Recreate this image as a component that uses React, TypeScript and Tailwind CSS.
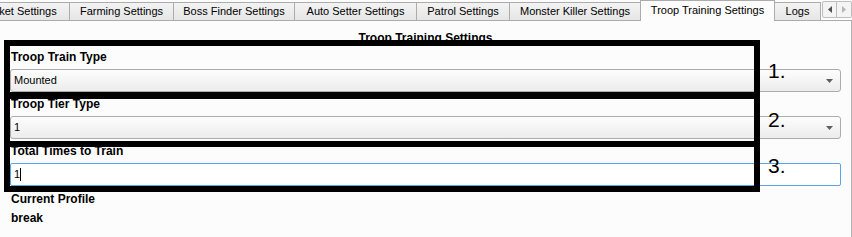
import React from "react";

const tabs = [
  { label: "Market Settings", w: "w-[102px] -ml-[32px]" },
  { label: "Farming Settings", w: "w-[104px]" },
  { label: "Boss Finder Settings", w: "w-[121px]" },
  { label: "Auto Setter Settings", w: "w-[122px]" },
  { label: "Patrol Settings", w: "w-[93px]" },
  { label: "Monster Killer Settings", w: "w-[130px]", noRight: true },
];

function Combo({ value }: { value: string }) {
  return (
    <div className="h-[23px] mt-[5px] flex items-center justify-between rounded-[3px] border border-[#acacac] bg-linear-to-b from-[#fdfdfd] to-[#ececec] pl-[3px] pr-[7px]">
      <span className="text-[11px] leading-[13px]">{value}</span>
      <svg width="7" height="4" viewBox="0 0 7 4">
        <path d="M0 0h7L3.5 4z" fill="#5f5f5f" />
      </svg>
    </div>
  );
}

function Label({ children, className = "" }: { children: React.ReactNode; className?: string }) {
  return <div className={`pl-[1px] text-[12px] leading-[13px] font-bold ${className}`}>{children}</div>;
}

export default function App() {
  return (
    <div
      className="relative w-[852px] h-[237px] overflow-hidden bg-[#fcfcfc] text-black flex flex-col"
      style={{ fontFamily: '"Liberation Sans", Arial, sans-serif' }}
    >
      {/* tab strip */}
      <div className="h-[21px] flex items-end shrink-0">
        {tabs.map((t) => (
          <div
            key={t.label}
            className={`${t.w} shrink-0 h-[19px] flex items-center justify-center border-t border-b border-[#acacac] ${
              t.noRight ? "" : "border-r"
            } bg-linear-to-b from-[#f3f3f3] to-[#e6e6e6] text-[11px] leading-[13px] whitespace-nowrap`}
          >
            {t.label}
          </div>
        ))}
        <div className="w-[135px] shrink-0 h-[21px] flex items-center justify-center border-t border-l border-r border-[#acacac] bg-[#fcfcfc] text-[11px] leading-[13px] pb-[2px] whitespace-nowrap">
          Troop Training Settings
        </div>
        <div className="w-[46px] shrink-0 h-[19px] flex items-center justify-center border-t border-b border-r border-[#acacac] bg-linear-to-b from-[#f3f3f3] to-[#e6e6e6] text-[11px] leading-[13px]">
          Logs
        </div>
        <div className="flex-1 h-[21px] flex items-start justify-end border-b border-[#acacac]">
          <div className="flex mt-[1px]">
            <div className="w-[15px] h-[17px] flex items-center justify-center border border-[#bdbdbd] bg-[#f4f4f4] rounded-l-[2px]">
              <svg width="4" height="7" viewBox="0 0 4 7">
                <path d="M4 0v7L0 3.5z" fill="#505050" />
              </svg>
            </div>
            <div className="w-[15px] h-[17px] flex items-center justify-center border border-l-0 border-[#bdbdbd] bg-[#f4f4f4] rounded-r-[2px]">
              <svg width="4" height="7" viewBox="0 0 4 7">
                <path d="M0 0v7L4 3.5z" fill="#b5b5b5" />
              </svg>
            </div>
          </div>
        </div>
      </div>

      {/* page */}
      <div className="flex-1 flex flex-col border-r border-[#b4b4b4] pl-[10px] pr-[10px] pt-[11px]">
        <div className="text-center text-[12px] leading-[13px] font-bold">Troop Training Settings</div>

        <Label className="mt-[6px]">Troop Train Type</Label>
        <Combo value="Mounted" />

        <Label className="mt-[6px]">Troop Tier Type</Label>
        <Combo value="1" />

        <Label className="mt-[6px]">Total Times to Train</Label>
        <div className="h-[23px] mt-[5px] flex items-center rounded-[2px] border border-[#56a5ee] bg-white pl-[3px]">
          <span className="text-[11px] leading-[13px]">1</span>
          <span className="w-px h-[13px] bg-black" />
        </div>

        <Label className="mt-[7px]">Current Profile</Label>
        <Label className="mt-[6px]">break</Label>
      </div>

      {/* annotation overlays */}
      <div className="absolute left-[4px] top-[40px] w-[756px] h-[58px] border-[6px] border-black pointer-events-none" />
      <div className="absolute left-[4px] top-[93px] w-[756px] h-[54px] border-[6px] border-black pointer-events-none" />
      <div className="absolute left-[4px] top-[141px] w-[756px] h-[51px] border-[6px] border-black pointer-events-none" />
      <div className="absolute left-[768px] top-[60px] text-[21px] leading-none">1.</div>
      <div className="absolute left-[768px] top-[109px] text-[21px] leading-none">2.</div>
      <div className="absolute left-[768px] top-[155px] text-[21px] leading-none">3.</div>
    </div>
  );
}
